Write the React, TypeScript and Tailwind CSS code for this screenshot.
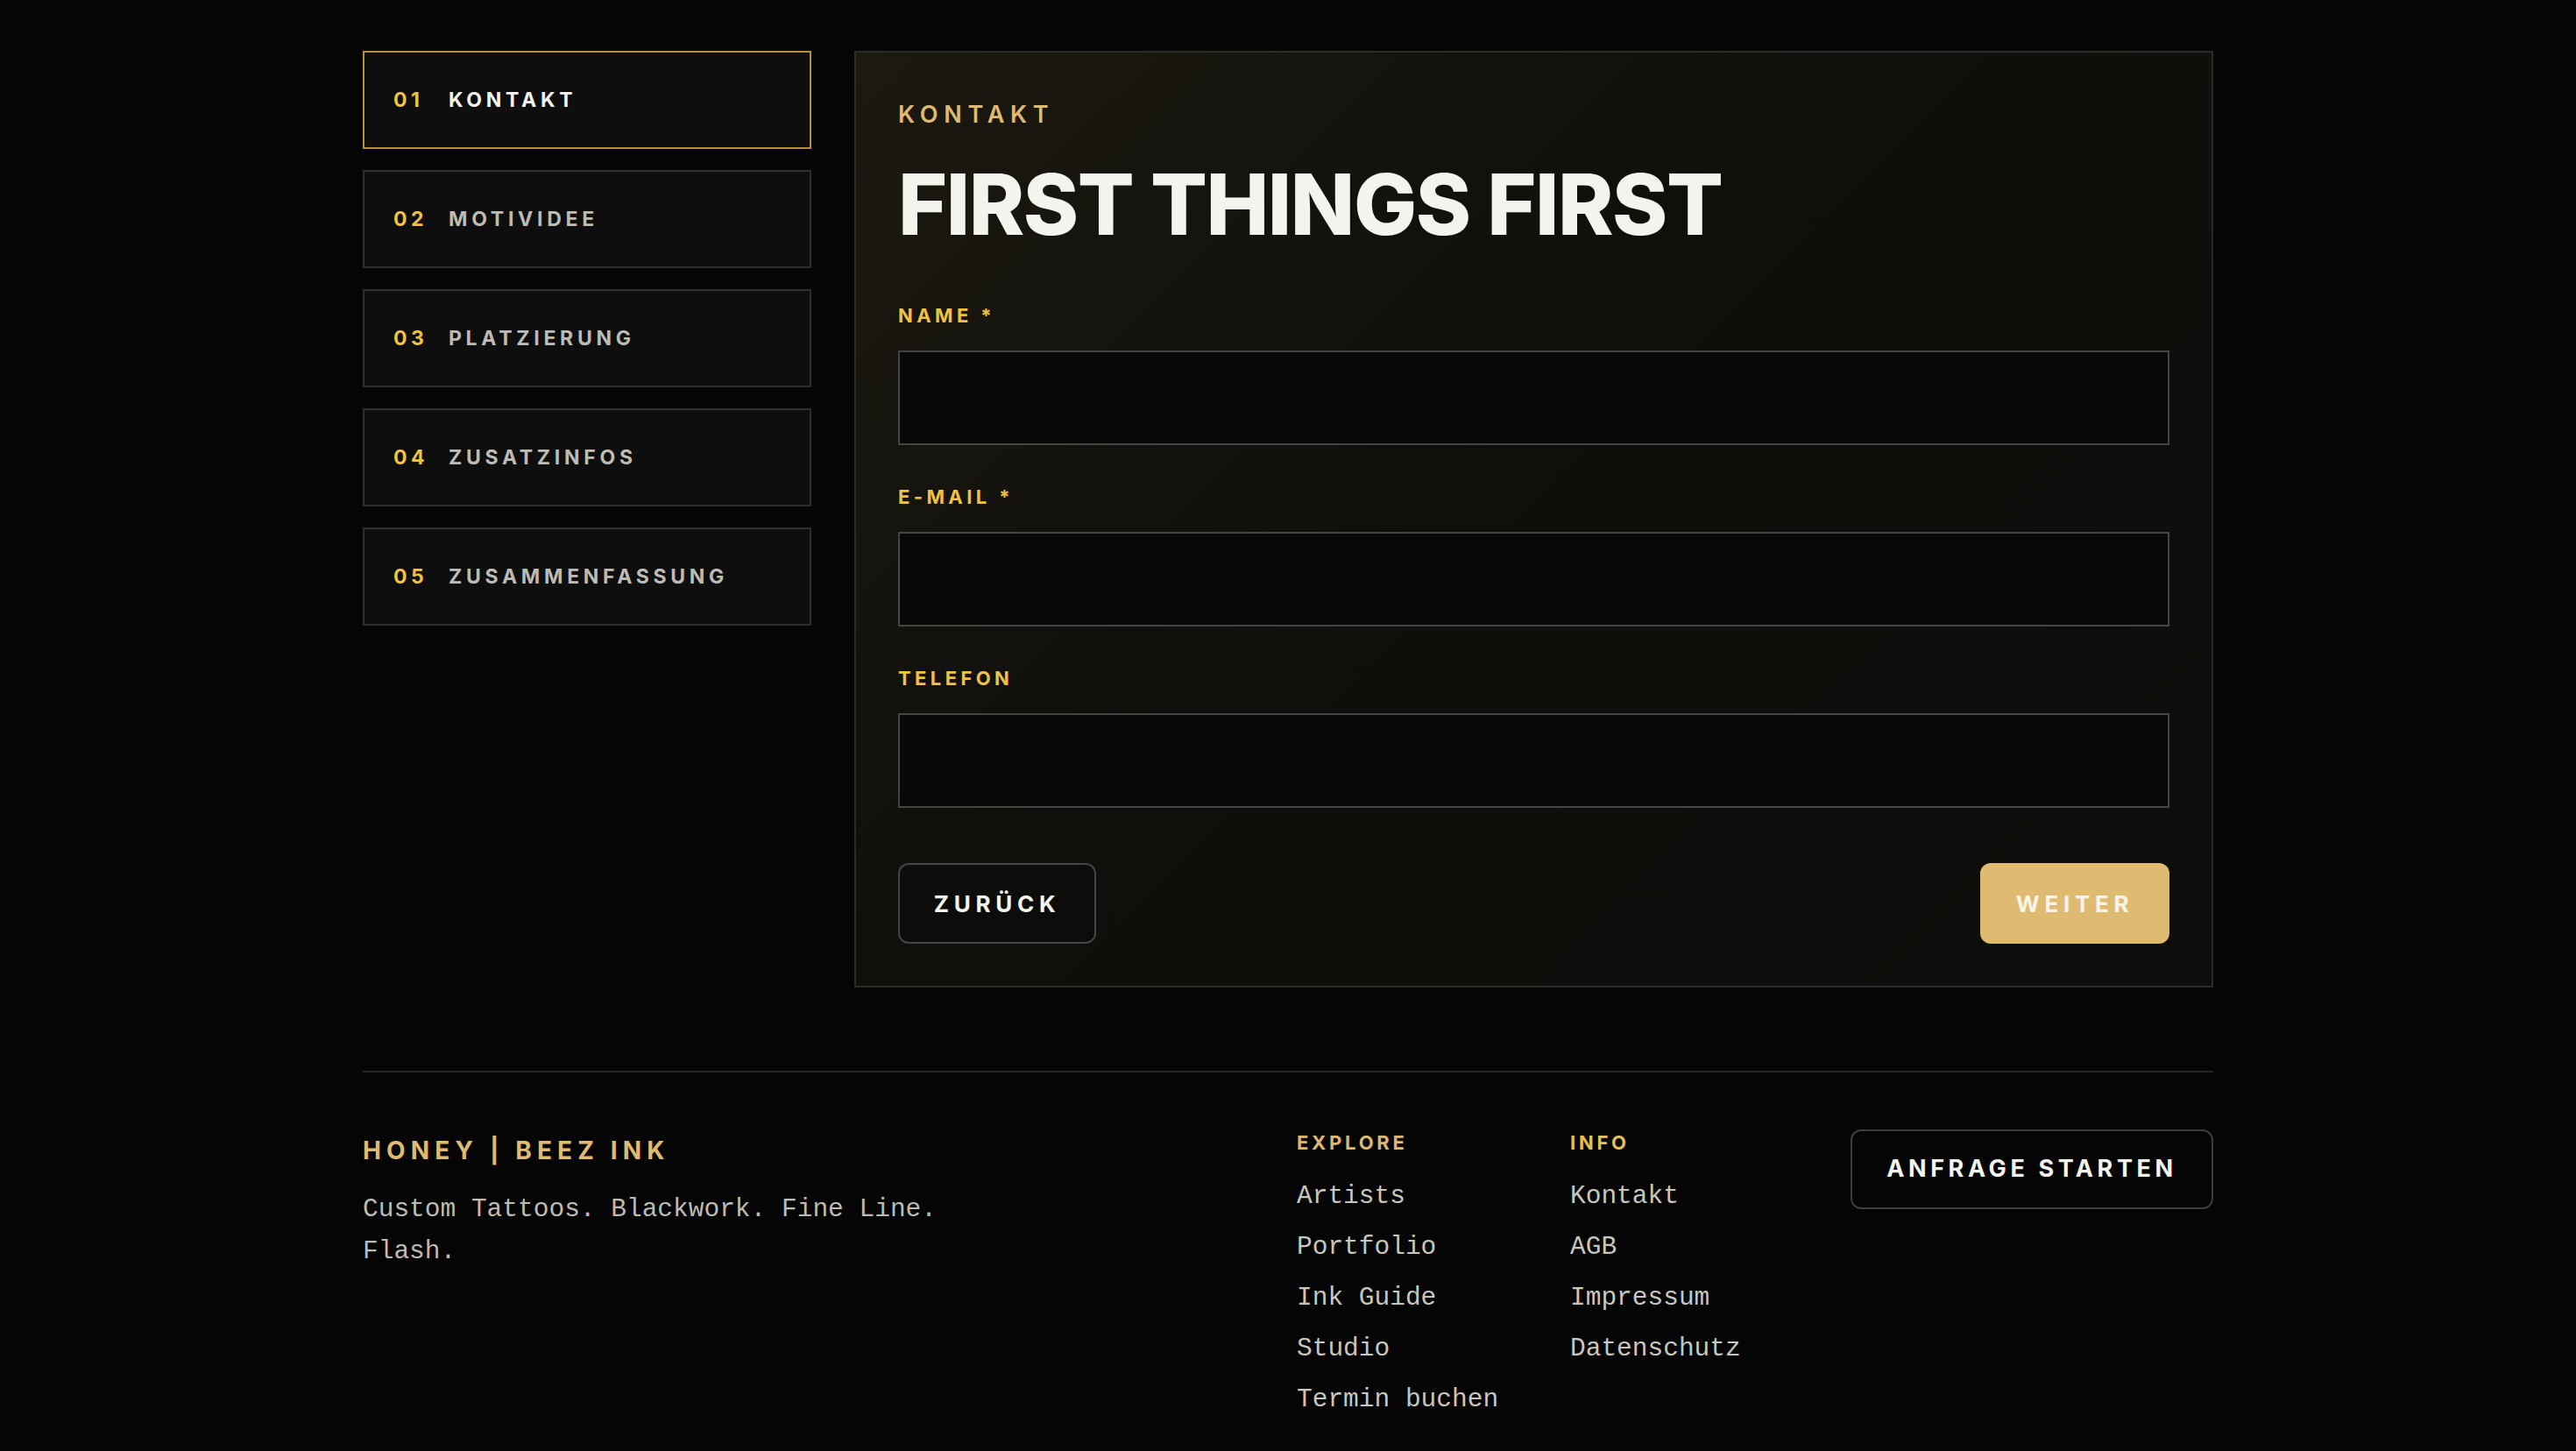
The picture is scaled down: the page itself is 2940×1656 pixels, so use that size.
import React from "react";

const steps = [
  { n: "01", label: "KONTAKT", active: true },
  { n: "02", label: "MOTIVIDEE" },
  { n: "03", label: "PLATZIERUNG" },
  { n: "04", label: "ZUSATZINFOS" },
  { n: "05", label: "ZUSAMMENFASSUNG" },
];

const sans = "font-['Inter','Noto_Sans',sans-serif]";
const mono = "font-['Liberation_Mono','DejaVu_Sans_Mono',monospace]";

function Field({ label }: { label: string }) {
  return (
    <div className="flex flex-col">
      <label className={`${sans} text-[22px] leading-[22px] font-bold tracking-[0.2em] text-[#f0c23f]`}>
        {label}
      </label>
      <div className="mt-[29px] h-[108px] border-2 border-[#454545] bg-[#080808]" />
    </div>
  );
}

export default function App() {
  return (
    <div className={`min-h-screen bg-[#050505] ${sans}`}>
      <div className="mx-auto w-[2112px] pt-[58px]">
        <div className="flex items-start gap-[49px]">
          <aside className="flex w-[512px] flex-col gap-[24px]">
            {steps.map((s) => (
              <div
                key={s.n}
                className={`flex h-[112px] items-center border-2 bg-[#0e0e0e] px-[33px] ${
                  s.active ? "border-[#b88f35]" : "border-[#2e2e2e]"
                }`}
              >
                <span className="w-[63px] text-[23px] font-bold tracking-[0.2em] text-[#f0c23f]">{s.n}</span>
                <span
                  className={`text-[23px] font-bold tracking-[0.205em] ${
                    s.active ? "text-[#f4f4ee]" : "text-[#bdbcb4]"
                  }`}
                >
                  {s.label}
                </span>
              </div>
            ))}
          </aside>

          <section className="flex-1 border-2 border-[#2c2b27] bg-[linear-gradient(135deg,#1c1910_0%,#0f0f0c_40%,#0d0d0b_100%)] px-[48px] pb-[48px] pt-[57px]">
            <div className="text-[27px] leading-[28px] font-semibold tracking-[0.25em] text-[#dfbb6f]">KONTAKT</div>
            <h1 className="mt-[40px] text-[96px] leading-[96px] font-extrabold tracking-[-0.015em] text-[#f4f4ee]">
              FIRST THINGS FIRST
            </h1>
            <div className="mt-[68px] flex flex-col gap-[48px]">
              <Field label="NAME *" />
              <Field label="E-MAIL *" />
              <Field label="TELEFON" />
            </div>
            <div className="mt-[63px] flex items-center justify-between">
              <button className="flex h-[92px] w-[226px] items-center justify-center rounded-[12px] border-2 border-[#444] bg-[#0c0c0b] text-[26px] font-bold tracking-[0.22em] text-[#f4f4ee]">
                ZURÜCK
              </button>
              <button className="flex h-[92px] w-[216px] items-center justify-center rounded-[12px] bg-[#dfbb72] text-[26px] font-bold tracking-[0.22em] text-[#f7f4ea]">
                WEITER
              </button>
            </div>
          </section>
        </div>

        <footer className="mt-[95px] border-t-2 border-[#262626] pt-[65px] pb-[60px]">
          <div className="flex items-start">
            <div className="flex-1 pt-[10px]">
              <div className="text-[28px] leading-[28px] font-bold tracking-[0.22em] text-[#dfbb6f]">HONEY | BEEZ INK</div>
              <p className={`${mono} mt-[29px] max-w-[720px] text-[29.5px] leading-[48px] text-[#bdbbb3]`}>
                Custom Tattoos. Blackwork. Fine Line. Flash.
              </p>
            </div>
            <div className="w-[312px] pt-[4px]">
              <div className="text-[22px] leading-[22px] font-bold tracking-[0.17em] text-[#dcb86e]">EXPLORE</div>
              <ul className={`${mono} mt-[21px] text-[29.5px] leading-[58px] text-[#c8c6bd]`}>
                <li>Artists</li>
                <li>Portfolio</li>
                <li>Ink Guide</li>
                <li>Studio</li>
                <li>Termin buchen</li>
              </ul>
            </div>
            <div className="w-[320px] pt-[4px]">
              <div className="text-[22px] leading-[22px] font-bold tracking-[0.17em] text-[#e6c055]">INFO</div>
              <ul className={`${mono} mt-[21px] text-[29.5px] leading-[58px] text-[#c8c6bd]`}>
                <li>Kontakt</li>
                <li>AGB</li>
                <li>Impressum</li>
                <li>Datenschutz</li>
              </ul>
            </div>
            <button className="flex h-[91px] w-[414px] items-center justify-center rounded-[12px] border-2 border-[#3d3d3d] bg-[#050505] text-[27px] font-bold tracking-[0.17em] text-[#f4f4ee]">
              ANFRAGE STARTEN
            </button>
          </div>
        </footer>
      </div>
    </div>
  );
}
